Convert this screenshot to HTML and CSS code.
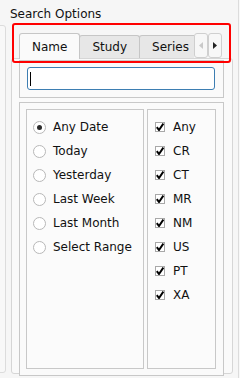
FILE: index.html
```html
<!DOCTYPE html>
<html lang="en">
<head>
  <meta charset="UTF-8">
  <meta name="viewport" content="width=device-width, initial-scale=1.0">
  <title>Search Options</title>
  <link rel="stylesheet" href="styles.css">
</head>
<body>
  <div class="window">
    <div class="side side-left"></div>

    <div class="search">
      <div class="search-title">Search Options</div>

      <div class="tabs">
        <div class="tab-bar">
          <div class="tab-strip">
            <div class="tab tab-active">Name</div>
            <div class="tab">Study</div>
            <div class="tab">Series</div>
          </div>
          <div class="tab-scroll">
            <button class="scroll-btn" disabled>
              <svg width="4" height="7" viewBox="0 0 4 7"><polygon points="4,0 0,3.5 4,7" fill="#c9c9c9"/></svg>
            </button>
            <button class="scroll-btn">
              <svg width="4" height="7" viewBox="0 0 4 7"><polygon points="0,0 4,3.5 0,7" fill="#222"/></svg>
            </button>
          </div>
        </div>

        <div class="tab-pane">
          <div class="group group-input">
            <div class="text-input"><span class="caret"></span></div>
          </div>

          <div class="group group-filters">
            <div class="filter-box dates">
              <label class="opt"><span class="radio radio-on"></span>Any Date</label>
              <label class="opt"><span class="radio"></span>Today</label>
              <label class="opt"><span class="radio"></span>Yesterday</label>
              <label class="opt"><span class="radio"></span>Last Week</label>
              <label class="opt"><span class="radio"></span>Last Month</label>
              <label class="opt"><span class="radio"></span>Select Range</label>
            </div>
            <div class="filter-box modalities">
              <label class="opt opt-check"><span class="check"><svg width="8" height="8" viewBox="0 0 8 8"><polyline points="0.8,4.2 3,7 7.4,0.6" fill="none" stroke="#000" stroke-width="2"/></svg></span>Any</label>
              <label class="opt opt-check"><span class="check"><svg width="8" height="8" viewBox="0 0 8 8"><polyline points="0.8,4.2 3,7 7.4,0.6" fill="none" stroke="#000" stroke-width="2"/></svg></span>CR</label>
              <label class="opt opt-check"><span class="check"><svg width="8" height="8" viewBox="0 0 8 8"><polyline points="0.8,4.2 3,7 7.4,0.6" fill="none" stroke="#000" stroke-width="2"/></svg></span>CT</label>
              <label class="opt opt-check"><span class="check"><svg width="8" height="8" viewBox="0 0 8 8"><polyline points="0.8,4.2 3,7 7.4,0.6" fill="none" stroke="#000" stroke-width="2"/></svg></span>MR</label>
              <label class="opt opt-check"><span class="check"><svg width="8" height="8" viewBox="0 0 8 8"><polyline points="0.8,4.2 3,7 7.4,0.6" fill="none" stroke="#000" stroke-width="2"/></svg></span>NM</label>
              <label class="opt opt-check"><span class="check"><svg width="8" height="8" viewBox="0 0 8 8"><polyline points="0.8,4.2 3,7 7.4,0.6" fill="none" stroke="#000" stroke-width="2"/></svg></span>US</label>
              <label class="opt opt-check"><span class="check"><svg width="8" height="8" viewBox="0 0 8 8"><polyline points="0.8,4.2 3,7 7.4,0.6" fill="none" stroke="#000" stroke-width="2"/></svg></span>PT</label>
              <label class="opt opt-check"><span class="check"><svg width="8" height="8" viewBox="0 0 8 8"><polyline points="0.8,4.2 3,7 7.4,0.6" fill="none" stroke="#000" stroke-width="2"/></svg></span>XA</label>
            </div>
          </div>
        </div>
      </div>

      <!-- red highlight round the tab bar -->
      <div class="highlight"></div>
    </div>

    <div class="side side-right"></div>
  </div>
</body>
</html>
```

FILE: styles.css
```css
body, html {
  margin: 0;
  padding: 0;
  height: 100%;
  background-color: #f6f6f6;
  overflow: hidden;
  font-family: "DejaVu Sans", "Noto Sans", sans-serif;
  font-size: 12px;
  color: #111;
}
.window {
  display: flex;
  width: 240px;
  height: 378px;
  overflow: hidden;
}
.side {
  flex-shrink: 0;
  box-sizing: border-box;
  border: 1px solid #dcdcdc;
  border-radius: 3px;
  background: #f8f8f8;
}
.side-left {
  width: 11px;
  margin-left: -5px;
  margin-top: 25px;
  height: 348px;
}
.side-right {
  width: 10px;
  height: 400px;
  margin-top: -5px;
}
.search {
  position: relative;
  width: 232px;
  flex-shrink: 0;
}
.search-title {
  margin-top: 7px;
  padding-left: 4px;
  line-height: 14px;
}
.tabs {
  margin: 12px 5px 0;
}
.tab-bar {
  display: flex;
  align-items: flex-end;
  height: 25px;
  padding: 0 11px 0 8px;
}
.tab-strip {
  display: flex;
  align-items: flex-end;
  flex: 1;
  min-width: 0;
  height: 26px;
  margin-bottom: -1px;
  overflow: hidden;
}
.tab {
  flex-shrink: 0;
  box-sizing: border-box;
  height: 23px;
  margin-bottom: 1px;
  padding: 4px 12px 0;
  line-height: 14px;
  border: 1px solid #c6c6c6;
  border-bottom: none;
  border-radius: 3px 3px 0 0;
  background: #e7e7e7;
  white-space: nowrap;
}
.tab + .tab {
  margin-left: -1px;
}
.tab-active {
  position: relative;
  z-index: 1;
  height: 26px;
  margin-bottom: 0;
  padding-top: 6px;
  background: #fafafa;
}
.tab-scroll {
  display: flex;
  align-self: stretch;
}
.scroll-btn {
  box-sizing: border-box;
  width: 14px;
  height: 25px;
  margin: 0;
  padding: 0;
  border: 1px solid #cfcfcf;
  border-radius: 3px;
  background: #f7f7f7;
  display: flex;
  align-items: center;
  justify-content: center;
}
.scroll-btn svg {
  display: block;
}
.tab-pane {
  box-sizing: border-box;
  height: 316px;
  padding: 1px 8px 9px 7px;
  border: 1px solid #d6d6d6;
  border-radius: 3px;
  background: #fafafa;
}
.group {
  border: 1px solid #c8c8c8;
  background: #fafafa;
}
.group-input {
  padding: 6px 8px 7px 7px;
}
.text-input {
  box-sizing: border-box;
  height: 23px;
  display: flex;
  align-items: center;
  padding-left: 2px;
  border: 1px solid #3d7eb2;
  border-radius: 3px;
  background: #fff;
}
.caret {
  width: 1px;
  height: 14px;
  background: #000;
}
.group-filters {
  display: flex;
  gap: 3px;
  margin-top: 4px;
  height: 260px;
  padding: 6px 7px 6px 6px;
}
.filter-box {
  box-sizing: border-box;
  border: 1px solid #c8c8c8;
  padding-top: 5px;
  background: #fbfbfb;
}
.dates {
  width: 118px;
  padding-left: 6px;
}
.modalities {
  flex: 1;
  padding-left: 7px;
}
.opt {
  display: flex;
  align-items: center;
  gap: 7px;
  height: 24px;
  line-height: 14px;
  white-space: nowrap;
}
.opt-check {
  gap: 8px;
}
.radio {
  box-sizing: border-box;
  width: 13px;
  height: 13px;
  border: 1px solid #b8b8b8;
  border-radius: 50%;
  background: #fff;
  display: flex;
  align-items: center;
  justify-content: center;
}
.radio-on::after {
  content: "";
  width: 5px;
  height: 5px;
  border-radius: 50%;
  background: #2b2b2b;
}
.check {
  box-sizing: border-box;
  width: 10px;
  height: 10px;
  border: 1px solid #a8a8a8;
  background: #fff;
  display: flex;
  align-items: center;
  justify-content: center;
}
.check svg {
  display: block;
}
.highlight {
  position: absolute;
  left: 6px;
  top: 23px;
  width: 219px;
  height: 40px;
  box-sizing: border-box;
  border: 2px solid #ff0000;
  border-radius: 3px;
}
```
